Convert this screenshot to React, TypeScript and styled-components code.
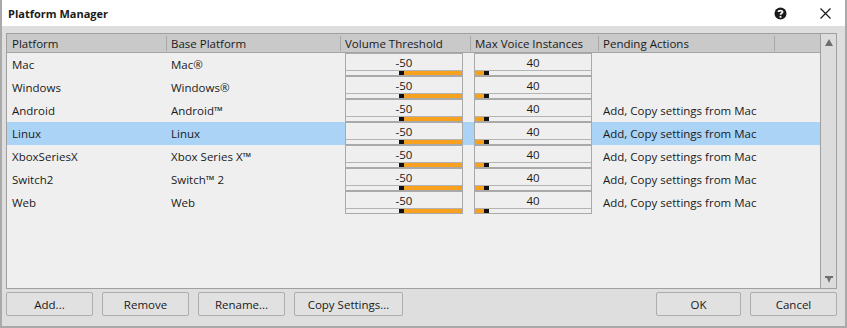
import React from 'react'
import styled, {createGlobalStyle} from 'styled-components'

const GlobalStyle = createGlobalStyle`
    html, body {
        margin: 0;
        padding: 0;
        background: #ffffff;
    }
    body {
        font-family: "Open Sans", "Noto Sans", "Liberation Sans", sans-serif;
        font-size: 11.5px;
        color: #1a1a1a;
    }
`

const COLUMNS = '159px 174px 130px 128px 176px 1fr'

const Window = styled.div`
    width: 847px;
    height: 328px;
    box-sizing: border-box;
    display: flex;
    flex-direction: column;
    background: #dedede;
    border: 2px solid #a9a9a9;
    border-top: none;
`

const TitleBar = styled.div`
    height: 26px;
    flex: none;
    background: #ffffff;
    display: flex;
    align-items: center;
    padding: 0 14px 0 6px;
`

const Title = styled.div`
    flex: 1;
    font-weight: 700;
    font-size: 11px;
    color: #1a1a1a;
`

const TitleIcons = styled.div`
    display: flex;
    align-items: center;
    gap: 33px;
`

const Body = styled.div`
    flex: 1;
    display: flex;
    flex-direction: column;
    padding: 7px 8px 10px 4px;
    gap: 3px;
    min-height: 0;
`

const Table = styled.div`
    height: 256px;
    box-sizing: border-box;
    border: 1px solid #a0a0a0;
    background: #efefef;
    display: flex;
`

const ListArea = styled.div`
    flex: 1;
    display: flex;
    flex-direction: column;
`

const HeaderRow = styled.div`
    display: grid;
    grid-template-columns: ${COLUMNS};
    height: 18px;
    background: #c9c9c9;
    border-bottom: 1px solid #a4a4a4;
`

const HeaderCell = styled.div<{ $divider?: boolean }>`
    position: relative;
    display: flex;
    align-items: center;
    padding-left: 5px;
    white-space: nowrap;
    overflow: hidden;

    &::before {
        content: '';
        display: ${p => (p.$divider ? 'block' : 'none')};
        position: absolute;
        left: 0;
        top: 2px;
        bottom: 1px;
        width: 1px;
        background: #a8a8a8;
    }
`

const Row = styled.div<{ $selected?: boolean }>`
    display: grid;
    grid-template-columns: ${COLUMNS};
    height: 23px;
    background: ${p => (p.$selected ? '#aad3f5' : 'transparent')};
`

const Cell = styled.div`
    display: flex;
    align-items: center;
    padding-left: 5px;
    white-space: nowrap;
`

const SliderCell = styled.div<{ $inset: number }>`
    padding-left: ${p => p.$inset}px;
`

const SliderBox = styled.div`
    width: 118px;
    height: 23px;
    box-sizing: border-box;
    border: 1px solid #a9a9a9;
    background: #efefef;
    display: flex;
    flex-direction: column;
`

const SliderValue = styled.div`
    height: 16px;
    line-height: 17px;
    text-align: center;
    border-bottom: 1px solid #b4b4b4;
`

const Track = styled.div`
    height: 4px;
    display: flex;
`

const Fill = styled.div<{ $filled?: boolean }>`
    height: 100%;
    background: ${p => (p.$filled ? '#f7a11e' : 'transparent')};
`

const Knob = styled.div`
    width: 5px;
    height: 100%;
    background: #111111;
    flex: none;
`

const ScrollBar = styled.div`
    width: 15px;
    flex: none;
    border-left: 1px solid #a0a0a0;
    background: #dcdcdc;
    display: flex;
    flex-direction: column;
    justify-content: space-between;
    align-items: center;
    padding: 5px 0 5px;
`

const ButtonBar = styled.div`
    display: flex;
    justify-content: space-between;
`

const ButtonGroup = styled.div`
    display: flex;
    gap: 9px;
`

const Button = styled.button<{ $width: number }>`
    width: ${p => p.$width}px;
    height: 24px;
    box-sizing: border-box;
    background: #e1e1e1;
    border: 1px solid #adadad;
    border-radius: 2px;
    font-family: inherit;
    font-size: 11.5px;
    color: #1a1a1a;
    padding: 0;
`

const TRACK_WIDTH = 111

type SliderProps = { value: number, min: number, max: number, fillRight?: boolean, inset: number }

const Slider: React.FC<SliderProps> = ({value, min, max, fillRight, inset}) => {
    const offset = Math.round(((value - min) / (max - min)) * TRACK_WIDTH)
    return (
        <SliderCell $inset={inset}>
            <SliderBox>
                <SliderValue>{value}</SliderValue>
                <Track>
                    <Fill $filled={!fillRight} style={{width: offset}}/>
                    <Knob/>
                    <Fill $filled={fillRight} style={{flex: 1}}/>
                </Track>
            </SliderBox>
        </SliderCell>
    )
}

const platforms = [
    {name: 'Mac', base: 'Mac®', pending: ''},
    {name: 'Windows', base: 'Windows®', pending: ''},
    {name: 'Android', base: 'Android™', pending: 'Add, Copy settings from Mac'},
    {name: 'Linux', base: 'Linux', pending: 'Add, Copy settings from Mac'},
    {name: 'XboxSeriesX', base: 'Xbox Series X™', pending: 'Add, Copy settings from Mac'},
    {name: 'Switch2', base: 'Switch™ 2', pending: 'Add, Copy settings from Mac'},
    {name: 'Web', base: 'Web', pending: 'Add, Copy settings from Mac'},
]

const HelpIcon = () => (
    <svg width="13" height="13" viewBox="0 0 13 13">
        <circle cx="6.5" cy="6.5" r="6" fill="#1a1a1a"/>
        <path d="M4.4 5 C4.4 3.2 8.6 3.1 8.6 5 C8.6 6.3 6.5 6.3 6.5 7.8" stroke="#ffffff" strokeWidth="1.7"
              fill="none"/>
        <rect x="5.6" y="8.9" width="1.8" height="1.8" fill="#ffffff"/>
    </svg>
)

const CloseIcon = () => (
    <svg width="11" height="11" viewBox="0 0 11 11">
        <path d="M0.5 0.5 L10.5 10.5 M10.5 0.5 L0.5 10.5" stroke="#1a1a1a" strokeWidth="1.2"/>
    </svg>
)

const App: React.FC = () => {
    return (
        <>
            <GlobalStyle/>
            <Window>
                <TitleBar>
                    <Title>Platform Manager</Title>
                    <TitleIcons>
                        <HelpIcon/>
                        <CloseIcon/>
                    </TitleIcons>
                </TitleBar>

                <Body>
                    <Table>
                        <ListArea>
                            <HeaderRow>
                                <HeaderCell>Platform</HeaderCell>
                                <HeaderCell $divider>Base Platform</HeaderCell>
                                <HeaderCell $divider>Volume Threshold</HeaderCell>
                                <HeaderCell $divider>Max Voice Instances</HeaderCell>
                                <HeaderCell $divider>Pending Actions</HeaderCell>
                                <HeaderCell $divider/>
                            </HeaderRow>

                            {platforms.map(item => (
                                <Row key={item.name} $selected={item.name === 'Linux'}>
                                    <Cell>{item.name}</Cell>
                                    <Cell>{item.base}</Cell>
                                    <Slider value={-50} min={-96} max={0} fillRight inset={5}/>
                                    <Slider value={40} min={0} max={512} inset={4}/>
                                    <Cell>{item.pending}</Cell>
                                    <Cell/>
                                </Row>
                            ))}
                        </ListArea>

                        <ScrollBar>
                            <svg width="8" height="7" viewBox="0 0 8 7">
                                <polygon points="4,0 8,7 0,7" fill="#6e6e6e"/>
                            </svg>
                            <svg width="8" height="7" viewBox="0 0 8 7">
                                <polygon points="0,0 8,0 8,2 6,2 4,7 2,2 0,2" fill="#6e6e6e"/>
                            </svg>
                        </ScrollBar>
                    </Table>

                    <ButtonBar>
                        <ButtonGroup>
                            <Button $width={87}>Add...</Button>
                            <Button $width={87}>Remove</Button>
                            <Button $width={87}>Rename...</Button>
                            <Button $width={109}>Copy Settings...</Button>
                        </ButtonGroup>
                        <ButtonGroup>
                            <Button $width={85}>OK</Button>
                            <Button $width={87}>Cancel</Button>
                        </ButtonGroup>
                    </ButtonBar>
                </Body>
            </Window>
        </>
    )
}

export default App
